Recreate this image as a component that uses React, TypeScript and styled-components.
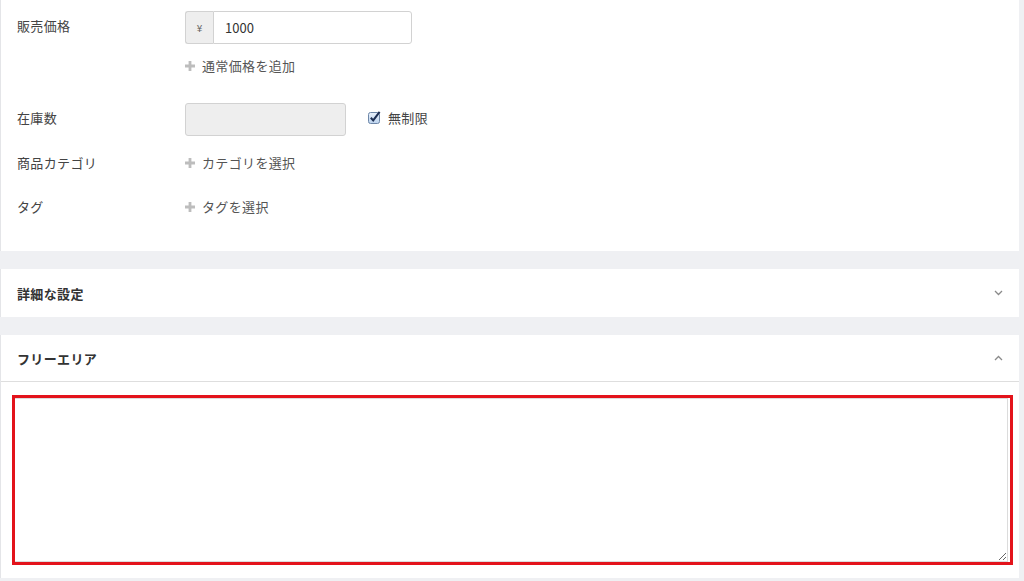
import styled, { createGlobalStyle } from 'styled-components'

const GlobalStyle = createGlobalStyle`
  html, body {
    margin: 0;
    padding: 0;
    background: #eff0f3;
  }
  body {
    font-family: "Noto Sans CJK JP", "Noto Sans", "Liberation Sans", sans-serif;
    font-size: 13px;
    color: #333;
    -webkit-font-smoothing: antialiased;
  }
`

const Page = styled.div`
  display: flex;
  flex-direction: column;
  gap: 18px;
  padding: 0 5px 0 0;
  background: #eff0f3;
`

const Card = styled.section`
  background: #fff;
  border-left: 1px solid #e4e5e8;
`

const FormBody = styled.div`
  display: flex;
  flex-direction: column;
  padding: 11px 16px 36px 16px;
`

const Row = styled.div<{ $top?: number }>`
  display: grid;
  grid-template-columns: 168px 1fr;
  align-items: start;
  margin-top: ${(p) => p.$top ?? 0}px;
`

const Label = styled.div<{ $pad?: number }>`
  padding-top: ${(p) => p.$pad ?? 0}px;
  height: 17px;
  line-height: 17px;
  letter-spacing: 0.35px;
  color: #444;
`

const Field = styled.div`
  display: flex;
  flex-direction: column;
  align-items: flex-start;
`

const InputGroup = styled.div`
  display: flex;
  width: 227px;
  height: 33px;
  box-sizing: border-box;
`

const Addon = styled.span`
  width: 28px;
  box-sizing: border-box;
  display: flex;
  align-items: center;
  justify-content: center;
  background: #eeeeee;
  border: 1px solid #d2d2d2;
  border-right: none;
  border-radius: 3px 0 0 3px;
  color: #666;
  font-size: 10px;
`

const TextInput = styled.input<{ $width?: number; $disabled?: boolean }>`
  flex: 1;
  width: ${(p) => (p.$width ? `${p.$width}px` : 'auto')};
  height: 33px;
  box-sizing: border-box;
  border: 1px solid #d2d2d2;
  border-radius: ${(p) => (p.$disabled ? '3px' : '0 3px 3px 0')};
  background: ${(p) => (p.$disabled ? '#eeeeee' : '#fff')};
  padding: 0 11px;
  font: inherit;
  font-size: 13px;
  color: #333;
  outline: none;
`

const AddLink = styled.a<{ $top?: number }>`
  display: inline-flex;
  align-items: center;
  gap: 7px;
  height: 17px;
  margin-top: ${(p) => p.$top ?? 0}px;
  line-height: 17px;
  color: #555;
  letter-spacing: 0.35px;
  text-decoration: none;
  cursor: pointer;
`

const StockLine = styled.div`
  display: flex;
  align-items: center;
  gap: 22px;
`

const CheckLabel = styled.label`
  display: inline-flex;
  align-items: center;
  gap: 7px;
  margin-top: -5px;
  color: #444;
  letter-spacing: 0.35px;
`

const PanelHeader = styled.header<{ $open?: boolean }>`
  display: flex;
  align-items: center;
  justify-content: space-between;
  height: ${(p) => (p.$open ? 46 : 48)}px;
  padding: 0 16px;
  border-bottom: ${(p) => (p.$open ? '1px solid #dedede' : 'none')};
  font-weight: 700;
  letter-spacing: 0.35px;
  color: #333;
`

const PanelBody = styled.div`
  padding: 13px 6px 13px 11px;
`

const Highlight = styled.div`
  border: 3px solid #e3131b;
  padding-right: 2px;
  height: 164px;
  display: flex;
`

const Area = styled.textarea`
  flex: 1;
  box-sizing: border-box;
  border: 1px solid #dcdcdc;
  border-left: none;
  resize: vertical;
  font: inherit;
  outline: none;
`

function Plus() {
  return (
    <svg width='10' height='10' viewBox='0 0 10 10'>
      <path d='M3.6 0h2.8v3.6H10v2.8H6.4V10H3.6V6.4H0V3.6h3.6z' fill='#bdbdbd' />
    </svg>
  )
}

function Checkbox() {
  return (
    <svg width='13' height='13' viewBox='0 0 13 13'>
      <defs>
        <linearGradient id='cb' x1='0' y1='0' x2='0' y2='1'>
          <stop offset='0' stopColor='#e9f1fb' />
          <stop offset='1' stopColor='#bcd3ee' />
        </linearGradient>
      </defs>
      <rect x='0.5' y='1.5' width='11' height='11' rx='2' fill='url(#cb)' stroke='#6e87a8' />
      <path d='M2.8 6.8l2.4 2.6L11.6 0.8' fill='none' stroke='#1c2e52' strokeWidth='2' />
    </svg>
  )
}

function Chevron({ up }: { up?: boolean }) {
  return (
    <svg width='9' height='6' viewBox='0 0 9 6'>
      <polyline
        points={up ? '1,5 4.5,1.5 8,5' : '1,1 4.5,4.5 8,1'}
        fill='none'
        stroke='#8a8a8a'
        strokeWidth='1.3'
      />
    </svg>
  )
}

export default function App() {
  return (
    <>
      <GlobalStyle />
      <Page>
        <Card>
          <FormBody>
            <Row>
              <Label $pad={6}>販売価格</Label>
              <Field>
                <InputGroup>
                  <Addon>¥</Addon>
                  <TextInput defaultValue='1000' />
                </InputGroup>
                <AddLink $top={13}>
                  <Plus />
                  通常価格を追加
                </AddLink>
              </Field>
            </Row>

            <Row $top={29}>
              <Label $pad={6}>在庫数</Label>
              <StockLine>
                <TextInput $width={161} $disabled disabled style={{ flex: 'none' }} />
                <CheckLabel>
                  <Checkbox />
                  無制限
                </CheckLabel>
              </StockLine>
            </Row>

            <Row $top={18}>
              <Label>商品カテゴリ</Label>
              <AddLink>
                <Plus />
                カテゴリを選択
              </AddLink>
            </Row>

            <Row $top={27}>
              <Label>タグ</Label>
              <AddLink>
                <Plus />
                タグを選択
              </AddLink>
            </Row>
          </FormBody>
        </Card>

        <Card>
          <PanelHeader>
            詳細な設定
            <Chevron />
          </PanelHeader>
        </Card>

        <Card>
          <PanelHeader $open>
            フリーエリア
            <Chevron up />
          </PanelHeader>
          <PanelBody>
            <Highlight>
              <Area />
            </Highlight>
          </PanelBody>
        </Card>
      </Page>
    </>
  )
}
